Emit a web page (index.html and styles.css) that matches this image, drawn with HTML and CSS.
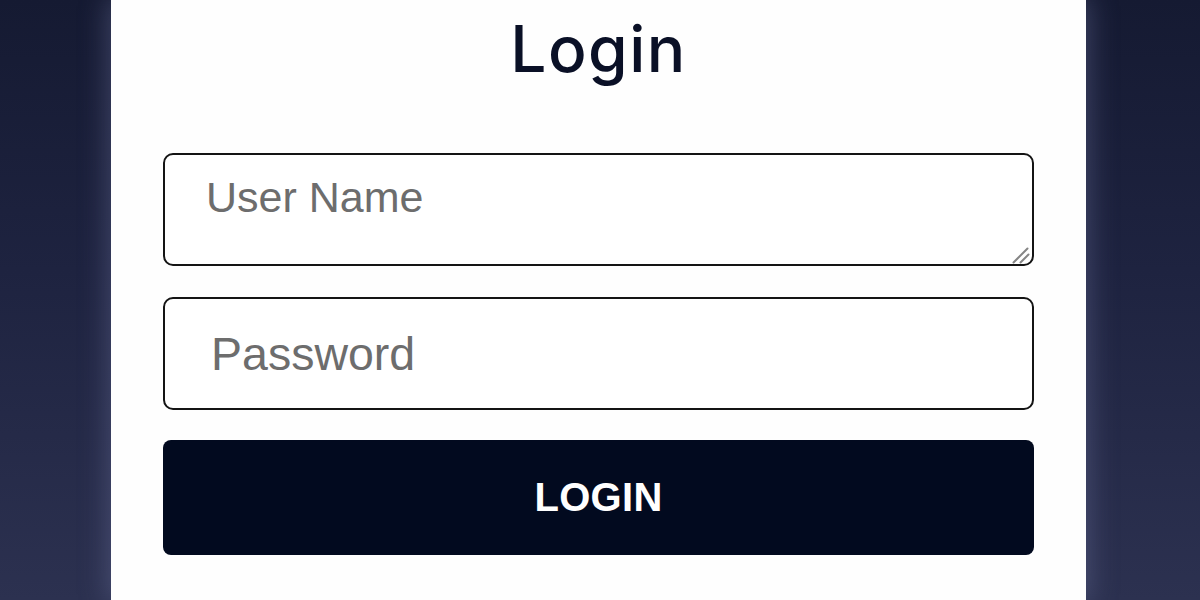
FILE: index.html
```html
<!DOCTYPE html>
<html lang="en">
<head>
<meta charset="utf-8">
<title>Login</title>
<link rel="stylesheet" href="styles.css">
</head>
<body>
<main class="page">
  <section class="card">
    <h1 class="title">Login</h1>
    <form class="form">
      <div class="area-wrap">
        <textarea class="field field-area" placeholder="User Name"></textarea>
        <svg class="grip" width="18" height="18" viewBox="0 0 18 18" aria-hidden="true">
          <line x1="1.5" y1="16.5" x2="15.5" y2="2.5"/>
          <line x1="8.5" y1="16.5" x2="16.5" y2="8.5"/>
        </svg>
      </div>
      <input class="field field-input" type="password" placeholder="Password">
      <button class="btn" type="button">LOGIN</button>
    </form>
  </section>
</main>
</body>
</html>
```

FILE: styles.css
```css
html, body {
  margin: 0;
  padding: 0;
  height: 100%;
}

body {
  background: linear-gradient(180deg, #151a32 0%, #1e2340 45%, #2c3150 100%);
  overflow: hidden;
}

.page {
  display: flex;
  justify-content: flex-start;
  padding-left: 111px;
  height: 100%;
}

.card {
  width: 975px;
  flex: 0 0 975px;
  box-sizing: border-box;
  background: #fefefe;
  padding: 17px 52px 0 52px;
  height: 100%;
  box-shadow: 0 0 26px 3px rgba(110, 118, 160, 0.45);
}

.title {
  margin: 0;
  text-align: center;
  font-family: Inter, "Noto Sans", sans-serif;
  font-weight: 500;
  font-size: 64px;
  line-height: 64px;
  letter-spacing: 1.5px;
  color: #0a1026;
}

.form {
  display: flex;
  flex-direction: column;
  margin-top: 72px;
}

.field {
  box-sizing: border-box;
  width: 100%;
  height: 113px;
  border: 2px solid #141414;
  border-radius: 10px;
  background: #fff;
  font-family: "Liberation Sans", Arial, sans-serif;
  color: #222;
  outline: none;
  margin: 0;
}

.field::placeholder {
  color: #6d6d6d;
  opacity: 1;
}

.area-wrap {
  position: relative;
}

.field-area {
  display: block;
  resize: none;
  font-size: 43px;
  padding: 18px 40px 0 41px;
  line-height: 49px;
}

.grip {
  position: absolute;
  right: 4px;
  bottom: 2px;
  stroke: #858585;
  stroke-width: 2;
  stroke-linecap: round;
  pointer-events: none;
}

.field-input {
  margin-top: 31px;
  font-size: 46.5px;
  padding: 0 46px;
}

.btn {
  margin-top: 30px;
  height: 115px;
  width: 100%;
  border: none;
  border-radius: 8px;
  background: #020a1f;
  color: #ffffff;
  font-family: "Liberation Sans", Arial, sans-serif;
  font-weight: 700;
  font-size: 40px;
  letter-spacing: 0.3px;
  cursor: pointer;
}
```
